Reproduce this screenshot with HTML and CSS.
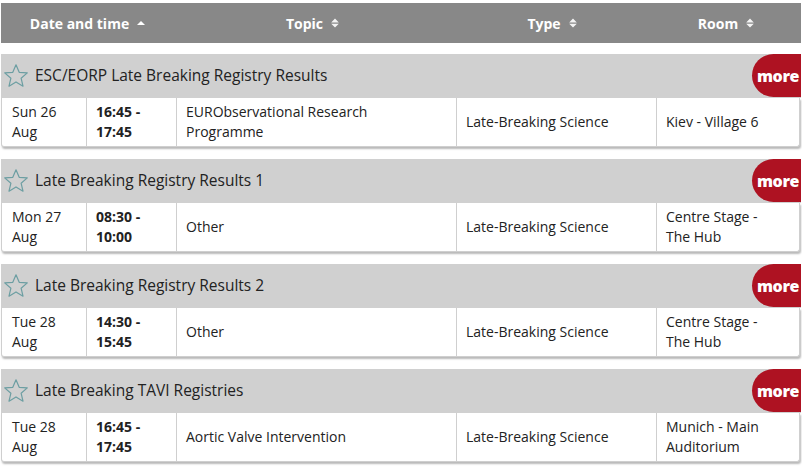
FILE: index.html
```html
<!DOCTYPE html>
<html>
<head>
<meta charset="utf-8">
<link rel="stylesheet" href="styles.css">
</head>
<body>
<div class="page">
  <div class="thead">
    <div class="th c-dt"><span>Date and time</span><svg class="sort" viewBox="0 0 10 12" width="10" height="12"><path d="M1 8 L5 4 L9 8 Z" fill="#fff"/></svg></div>
    <div class="th c-topic"><span>Topic</span><svg class="sort" viewBox="0 0 10 12" width="10" height="12"><path d="M1.2 5.4 L5 1.6 L8.8 5.4 Z M1.2 6.8 L5 10.6 L8.8 6.8 Z" fill="#fff" opacity="0.9"/></svg></div>
    <div class="th c-type"><span>Type</span><svg class="sort" viewBox="0 0 10 12" width="10" height="12"><path d="M1.2 5.4 L5 1.6 L8.8 5.4 Z M1.2 6.8 L5 10.6 L8.8 6.8 Z" fill="#fff" opacity="0.9"/></svg></div>
    <div class="th c-room"><span>Room</span><svg class="sort" viewBox="0 0 10 12" width="10" height="12"><path d="M1.2 5.4 L5 1.6 L8.8 5.4 Z M1.2 6.8 L5 10.6 L8.8 6.8 Z" fill="#fff" opacity="0.9"/></svg></div>
  </div>

  <div class="group">
    <div class="title">
      <svg class="star" viewBox="0 0 26 26" width="26" height="26"><path d="M13 1.8 L16.2 9.3 L24.3 9.9 L18.1 15.2 L20 23.2 L13 18.9 L6 23.2 L7.9 15.2 L1.7 9.9 L9.8 9.3 Z" fill="none" stroke="#6c9ea2" stroke-width="1.2" stroke-linejoin="round"/></svg>
      <span class="title-text">ESC/EORP Late Breaking Registry Results</span>
      <span class="more">more</span>
    </div>
    <div class="row">
      <div class="td c-date">Sun 26<br>Aug</div>
      <div class="td c-time">16:45 -<br>17:45</div>
      <div class="td c-topic2">EURObservational Research<br>Programme</div>
      <div class="td c-type2">Late-Breaking Science</div>
      <div class="td c-room2">Kiev - Village 6</div>
    </div>
  </div>

  <div class="group">
    <div class="title">
      <svg class="star" viewBox="0 0 26 26" width="26" height="26"><path d="M13 1.8 L16.2 9.3 L24.3 9.9 L18.1 15.2 L20 23.2 L13 18.9 L6 23.2 L7.9 15.2 L1.7 9.9 L9.8 9.3 Z" fill="none" stroke="#6c9ea2" stroke-width="1.2" stroke-linejoin="round"/></svg>
      <span class="title-text">Late Breaking Registry Results 1</span>
      <span class="more">more</span>
    </div>
    <div class="row">
      <div class="td c-date">Mon 27<br>Aug</div>
      <div class="td c-time">08:30 -<br>10:00</div>
      <div class="td c-topic2">Other</div>
      <div class="td c-type2">Late-Breaking Science</div>
      <div class="td c-room2">Centre Stage -<br>The Hub</div>
    </div>
  </div>

  <div class="group">
    <div class="title">
      <svg class="star" viewBox="0 0 26 26" width="26" height="26"><path d="M13 1.8 L16.2 9.3 L24.3 9.9 L18.1 15.2 L20 23.2 L13 18.9 L6 23.2 L7.9 15.2 L1.7 9.9 L9.8 9.3 Z" fill="none" stroke="#6c9ea2" stroke-width="1.2" stroke-linejoin="round"/></svg>
      <span class="title-text">Late Breaking Registry Results 2</span>
      <span class="more">more</span>
    </div>
    <div class="row">
      <div class="td c-date">Tue 28<br>Aug</div>
      <div class="td c-time">14:30 -<br>15:45</div>
      <div class="td c-topic2">Other</div>
      <div class="td c-type2">Late-Breaking Science</div>
      <div class="td c-room2">Centre Stage -<br>The Hub</div>
    </div>
  </div>

  <div class="group">
    <div class="title">
      <svg class="star" viewBox="0 0 26 26" width="26" height="26"><path d="M13 1.8 L16.2 9.3 L24.3 9.9 L18.1 15.2 L20 23.2 L13 18.9 L6 23.2 L7.9 15.2 L1.7 9.9 L9.8 9.3 Z" fill="none" stroke="#6c9ea2" stroke-width="1.2" stroke-linejoin="round"/></svg>
      <span class="title-text">Late Breaking TAVI Registries</span>
      <span class="more">more</span>
    </div>
    <div class="row">
      <div class="td c-date">Tue 28<br>Aug</div>
      <div class="td c-time">16:45 -<br>17:45</div>
      <div class="td c-topic2">Aortic Valve Intervention</div>
      <div class="td c-type2">Late-Breaking Science</div>
      <div class="td c-room2">Munich - Main<br>Auditorium</div>
    </div>
  </div>
</div>
</body>
</html>
```

FILE: styles.css
```css
html, body {
  margin: 0;
  padding: 0;
  background: #fff;
}
body {
  font-family: "Open Sans", "Liberation Sans", sans-serif;
  color: #222;
}
.page {
  width: 800px;
  padding: 3px 1px 0 1px;
}
.thead {
  display: grid;
  grid-template-columns: 172px 280px 199px 149px;
  height: 40px;
  background: #888888;
  color: #fff;
  font-weight: 700;
  font-size: 14px;
  margin-bottom: 11px;
}
.th {
  display: flex;
  align-items: center;
  justify-content: center;
  gap: 7px;
}
.th.c-dt {
  padding-left: 2px;
}
.sort { display: block; }

.group {
  margin-bottom: 12px;
}
.title {
  position: relative;
  display: flex;
  align-items: center;
  height: 44px;
  background: #d0d0d0;
}
.star {
  margin: 0 6px 0 2px;
  display: block;
}
.title-text {
  font-size: 15.5px;
  color: #222;
  margin-top: -2px;
}
.more {
  position: absolute;
  right: 0;
  top: 0;
  height: 43px;
  width: 49px;
  background: #ae1222;
  border-radius: 22px 0 0 22px;
  color: #fff;
  font-weight: 800;
  font-size: 16px;
  display: flex;
  align-items: center;
  justify-content: flex-end;
  padding-right: 2px;
  box-sizing: border-box;
  letter-spacing: -0.4px;
}
.row {
  display: grid;
  grid-template-columns: 84px 90px 280px 200px 145px;
  height: 49px;
  background: #fff;
  border: 1px solid #cfcfcf;
  border-top: none;
  box-sizing: border-box;
  border-radius: 0 0 3px 3px;
  box-shadow: 1px 2px 2px rgba(0,0,0,0.28);
  width: 799px;
}
.td {
  display: flex;
  align-items: center;
  padding-left: 9px;
  font-size: 14px;
  line-height: 20px;
  color: #222;
  border-left: 1px solid #cfcfcf;
}
.td.c-date {
  border-left: none;
  padding-left: 10px;
}
.td.c-time {
  font-weight: 700;
}
```
